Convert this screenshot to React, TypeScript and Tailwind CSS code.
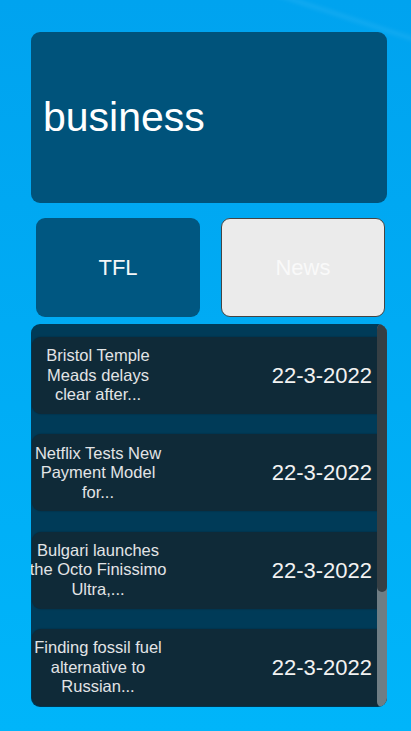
const articles = [
  { lines: ["Bristol Temple", "Meads delays", "clear after..."], date: "22-3-2022" },
  { lines: ["Netflix Tests New", "Payment Model", "for..."], date: "22-3-2022" },
  { lines: ["Bulgari launches", "the Octo Finissimo", "Ultra,..."], date: "22-3-2022" },
  { lines: ["Finding fossil fuel", "alternative to", "Russian..."], date: "22-3-2022" },
];

function NewsRow({ lines, date }: { lines: string[]; date: string }) {
  return (
    <div className="flex h-[77px] shrink-0 items-center rounded-[9px] bg-[#0f2a38] shadow-[0_0_2px_rgba(0,0,0,0.35)]">
      <div className="flex w-[132px] flex-col items-center text-center text-[16.5px] leading-[19.5px] text-[#e2e4e6]">
        {lines.map((l, i) => (
          <span key={i} className="whitespace-nowrap">
            {l}
          </span>
        ))}
      </div>
      <div className="ml-auto pr-[15px] text-[22px] text-[#f2f2f2]">{date}</div>
    </div>
  );
}

export default function App() {
  return (
    <div className="relative h-[731px] w-full overflow-hidden bg-gradient-to-b from-[#00a3ef] to-[#00b5fa] pt-[32px] font-['Liberation_Sans',Arial,sans-serif]">
      {/* faint light streak, top right */}
      <div className="pointer-events-none absolute -right-[60px] top-[14px] h-[3px] w-[260px] rotate-[18deg] bg-white/10 blur-[2px]" />

      <div className="ml-[31px] mr-[24px] flex h-[171px] items-center rounded-[9px] bg-[#00537b] pl-[12px]">
        <span className="text-[41px] text-white">business</span>
      </div>

      <div className="ml-[36px] mt-[15px] flex gap-[21px]">
        <button className="flex h-[99px] w-[164px] items-center justify-center rounded-[9px] bg-[#005781] text-[22px] text-[#f4f6f8]">
          TFL
        </button>
        <button className="flex h-[99px] w-[164px] items-center justify-center rounded-[9px] border-[1.5px] border-[#444] bg-[#ebebeb] text-[22px] text-[#f9f9f9]">
          News
        </button>
      </div>

      <div className="relative ml-[31px] mr-[24px] mt-[7px] h-[383px] overflow-hidden rounded-[9px] bg-[#003b58]">
        <div className="flex flex-col gap-[20.3px] pl-[1px] pt-[13px]">
          {articles.map((a, i) => (
            <NewsRow key={i} lines={a.lines} date={a.date} />
          ))}
        </div>

        {/* scrollbar */}
        <div className="absolute right-0 top-0 flex h-full w-[10px] flex-col overflow-hidden rounded-full bg-[#6f7d84]">
          <div className="h-[268px] rounded-b-full bg-[#363f44]" />
        </div>
      </div>
    </div>
  );
}
